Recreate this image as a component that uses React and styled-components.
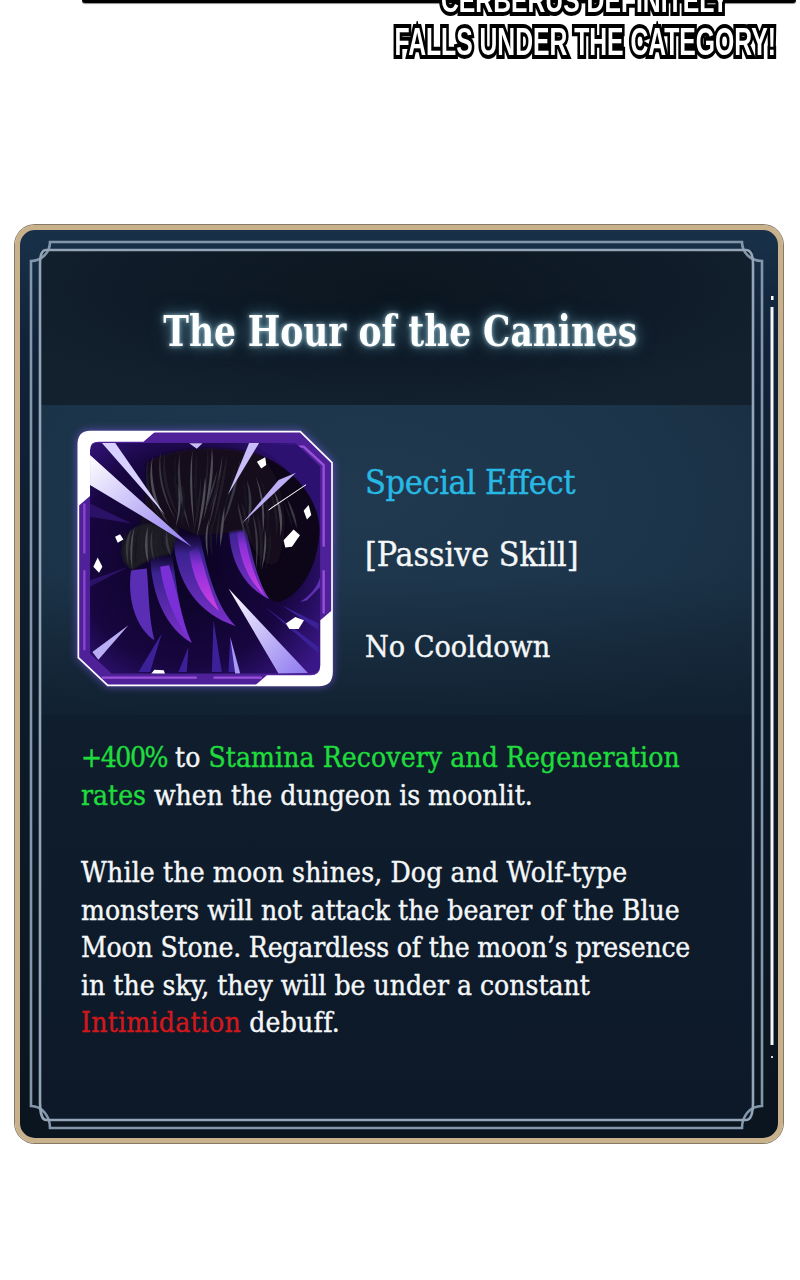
import React from "react";
import styled, { createGlobalStyle } from "styled-components";

const serif = `"DejaVu Serif Condensed", "DejaVu Serif", "Liberation Serif", serif`;

const GlobalStyle = createGlobalStyle`
  html, body {
    margin: 0;
    padding: 0;
    background: #fff;
  }
`;

const Page = styled.div`
  width: 800px;
  height: 1280px;
  overflow: hidden;
  background: #fff;
`;

const ComicStrip = styled.div`
  position: relative;
  height: 224px;
  overflow: hidden;
`;

const PanelEdge = styled.div`
  height: 3px;
  margin-left: 82px;
  width: 714px;
  background: #000;
  border-radius: 0 0 3px 3px;
  box-shadow: 0 1px 1px rgba(0, 0, 0, 0.45);
`;

const Caption = styled.div`
  margin-top: -24px;
  display: flex;
  flex-direction: column;
  align-items: flex-end;
  padding-right: 24px;
  font-family: "Liberation Sans", sans-serif;
  font-weight: 700;
  color: #fff;
  text-transform: uppercase;
  -webkit-text-stroke: 8px #000;
  paint-order: stroke fill;
  stroke-linejoin: round;
`;

const CaptionLine = styled.div`
  white-space: nowrap;
  font-size: ${(p) => p.$size}px;
  line-height: 42px;
  margin-right: ${(p) => p.$inset || 0}px;
  transform: scaleX(${(p) => p.$squeeze});
  transform-origin: right center;
`;

const Card = styled.section`
  position: relative;
  box-sizing: border-box;
  width: 768px;
  height: 918px;
  margin: 1px 0 0 15px;
  padding: 20px 25px 18px 20px;
  border: 5px solid #c9b18b;
  border-radius: 20px;
  box-shadow: 0 0 0 1px #857a65;
  background: linear-gradient(180deg, #183149 0%, #11233a 12%, #0d1a29 50%, #0b151f 100%);
  font-family: ${serif};
  color: #f4f7f8;
`;

const Panel = styled.div`
  height: 100%;
  display: flex;
  flex-direction: column;
`;

const Header = styled.header`
  height: 155px;
  box-sizing: border-box;
  padding: 0 0 0 7px;
  display: flex;
  align-items: center;
  justify-content: center;
  background: radial-gradient(ellipse 60% 80% at 50% 25%, #0b1620 0%, #101c29 70%, #13212e 100%);
`;

const Title = styled.h1`
  margin: 7px 0 0;
  white-space: nowrap;
  font-size: 43px;
  font-weight: 700;
  line-height: 1;
  color: #fdfefe;
  transform: scaleX(0.89);
  text-shadow:
    0 0 5px rgba(180, 225, 240, 0.8),
    0 0 14px rgba(120, 180, 200, 0.6),
    0 0 24px rgba(90, 150, 175, 0.4);
`;

const Summary = styled.div`
  height: 310px;
  box-sizing: border-box;
  padding: 25px 0 0 37px;
  display: flex;
  gap: 31px;
  background:
    linear-gradient(180deg, rgba(15, 29, 44, 0) 55%, rgba(15, 29, 44, 0.75) 100%),
    radial-gradient(ellipse 75% 90% at 45% 30%, #20394f 0%, #1c3449 60%, #172c3f 100%);
`;

const SkillIcon = styled.svg`
  flex: none;
  width: 257px;
  height: 257px;
  filter: drop-shadow(0 0 4px rgba(130, 90, 240, 0.7));
`;

const Details = styled.div`
  display: flex;
  flex-direction: column;
  padding-top: 29px;
  -webkit-text-stroke: 0.4px currentColor;
`;

const Kind = styled.div`
  font-size: 34px;
  line-height: 46px;
  letter-spacing: -0.4px;
  color: #27b8e3;
`;

const Passive = styled.div`
  margin-top: 27px;
  font-size: 33.6px;
  line-height: 46px;
`;

const Cooldown = styled.div`
  margin-top: 49px;
  font-size: 30.2px;
  line-height: 40px;
`;

const Description = styled.div`
  flex: 1;
  padding: 24px 0 0 41px;
  display: flex;
  flex-direction: column;
  gap: 40px;
  background: linear-gradient(180deg, #0f1d2d 0%, #0d1928 100%);
`;

const Paragraph = styled.div`
  font-size: 28px;
  line-height: 37.5px;
  -webkit-text-stroke: 0.4px currentColor;
`;

const Line = styled.div`
  white-space: nowrap;
  letter-spacing: ${(p) => p.$tracking || 0}px;
`;

const Buff = styled.span`
  color: #1fdc3c;
  letter-spacing: ${(p) => p.$tracking || 0}px;
`;

const Debuff = styled.span`
  color: #d0181c;
`;

const FrameArt = styled.svg`
  position: absolute;
  left: -6px;
  top: -6px;
  width: 770px;
  height: 920px;
  pointer-events: none;
`;

// corner flourishes of the double line frame, in page coordinates
const frameOuter =
  "M50 242 H742 C742 252 750 261 762 261 V1106 C750 1106 742 1116 742 1128 H50 C50 1116 42 1106 31 1106 V261 C42 261 50 252 50 242 Z";
const frameInner =
  "M46 250 H746 C751 250 753 256 753 264 V1102 C753 1112 751 1120 746 1120 H46 C42 1120 40 1112 40 1102 V264 C40 256 42 250 46 250 Z";

function Frame() {
  return (
    <FrameArt viewBox="14 224 770 920">
      <path d={frameOuter} fill="none" stroke="#8397ab" strokeWidth="2.6" />
      <path d={frameInner} fill="none" stroke="#93a5b6" strokeWidth="2.6" />
      <rect x="771" y="296" width="2.5" height="4" fill="#fff" />
      <rect x="770.5" y="307" width="3" height="738" fill="#f4f6f7" />
      <rect x="771" y="1056" width="2" height="2" fill="#cfd6da" />
    </FrameArt>
  );
}

// hair strands as quadratic curves: start, control, end
const strands = [
  [262, 110, 245, 220, 310, 310], [300, 95, 285, 190, 345, 300], [345, 100, 330, 200, 375, 330],
  [395, 90, 385, 190, 400, 320], [440, 85, 445, 170, 415, 300], [485, 105, 475, 190, 440, 335],
  [525, 120, 510, 220, 470, 320], [350, 190, 365, 250, 345, 320], [420, 170, 420, 240, 395, 350],
  [470, 150, 455, 210, 430, 280], [545, 180, 565, 250, 545, 320], [585, 170, 615, 250, 605, 345],
  [625, 210, 655, 280, 645, 350], [575, 280, 595, 350, 585, 450], [200, 325, 178, 370, 190, 435],
  [222, 318, 205, 380, 215, 450], [248, 318, 238, 380, 250, 430], [275, 328, 265, 375, 282, 425],
  [305, 332, 300, 370, 318, 410], [445, 295, 430, 350, 442, 410], [478, 260, 470, 320, 465, 380],
  [530, 245, 540, 300, 560, 370], [665, 235, 685, 280, 695, 325], [612, 325, 618, 380, 602, 450],
];

const strandShades = ["#4e4d58", "#201f29", "#383742", "#191822"];

function strandPath([x1, y1, cx, cy, x2, y2], shift, width) {
  return `M${x1 + shift} ${y1} Q${cx + shift - width} ${cy} ${x2 + shift} ${y2} Q${cx + shift + width} ${cy} ${x1 + shift} ${y1} Z`;
}

const shards = [
  "M575 125 L600 112 L603 135 L588 145 Z",
  "M715 272 L730 255 L738 285 L725 298 Z",
  "M655 360 L685 328 L704 345 L680 380 L660 382 Z",
  "M150 350 L165 342 L175 358 L158 368 Z",
  "M85 440 L98 412 L112 440 L102 458 Z",
  "M662 610 L690 590 L716 600 L700 626 L672 626 Z",
  "M258 760 L268 748 L296 750 L300 762 Z",
  "M372 70 L412 70 L395 86 Z",
];

function WolfClawIcon() {
  return (
    <SkillIcon viewBox="36 30 770 770">
      <defs>
        <radialGradient id="artBg" cx="42%" cy="50%" r="68%">
          <stop offset="0%" stopColor="#0a0320" />
          <stop offset="65%" stopColor="#170640" />
          <stop offset="100%" stopColor="#3a1788" />
        </radialGradient>
        <linearGradient id="slash" x1="0" y1="0" x2="1" y2="1">
          <stop offset="0%" stopColor="#ffffff" />
          <stop offset="100%" stopColor="#8d78f0" />
        </linearGradient>
        <linearGradient id="claw" x1="0" y1="0" x2="0" y2="1">
          <stop offset="0%" stopColor="#33207f" stopOpacity="0" />
          <stop offset="22%" stopColor="#3a2390" />
          <stop offset="100%" stopColor="#7c30cc" />
        </linearGradient>
        <linearGradient id="clawCore" x1="0" y1="0" x2="0" y2="1">
          <stop offset="0%" stopColor="#6a2cc8" stopOpacity="0" />
          <stop offset="30%" stopColor="#8a30d8" />
          <stop offset="100%" stopColor="#d040e4" />
        </linearGradient>
        <filter id="soft" x="-10%" y="-10%" width="120%" height="120%">
          <feGaussianBlur stdDeviation="2.5" />
        </filter>
        <filter id="fine" x="-10%" y="-10%" width="120%" height="120%">
          <feGaussianBlur stdDeviation="1.4" />
        </filter>
        <clipPath id="artClip">
          <path d="M100 68 H690 L765 140 V730 Q765 760 735 760 H140 L75 700 V93 Q75 68 100 68 Z" />
        </clipPath>
      </defs>

      <path d="M75 35 H705 L800 128 V755 Q800 795 760 795 H128 L40 712 V75 Q40 35 75 35 Z" fill="#4f2199" stroke="#fff" strokeWidth="5" />
      <path d="M640 80 H715 L775 135 V380 M775 450 V580 M110 772 H395 M445 772 H590" fill="none" stroke="#9a50d8" strokeWidth="7" />
      <path d="M58 250 V400 M58 450 V690" fill="none" stroke="#8a45cc" strokeWidth="7" />

      <g clipPath="url(#artClip)">
        <rect x="60" y="60" width="720" height="720" fill="url(#artBg)" />
        <path d="M560 75 H700 L765 140 V330 C720 200 650 110 560 75 Z" fill="#2d1170" />
        <path d="M75 250 L200 310 L75 290 Z M75 480 L190 440 L75 500 Z" fill="#2c1266" />
        <path d="M220 755 L290 640 L255 755 Z M340 755 L370 680 L365 755 Z M440 755 L445 600 L470 755 Z M490 755 L495 650 L525 755 Z M600 560 L760 680 L760 700 Z M650 555 L760 610 L760 630 Z" fill="#3b2197" />

        <path d="M560 100 C660 120 770 230 762 340 C755 450 700 530 640 545 C590 540 550 470 530 390 Z" fill="#0d0518" />

        <path d="M198 450 C185 540 215 625 268 660 C250 590 252 520 245 445 Z" fill="#5a2eb4" />
        <path d="M255 400 C258 530 305 625 380 668 C345 590 335 510 322 405 Z" fill="url(#claw)" />
        <path d="M285 440 C295 520 330 600 372 660 C350 590 335 510 312 435 Z" fill="#7b2fd6" />
        <path d="M325 350 C330 490 400 580 512 618 C455 560 430 470 402 340 Z" fill="url(#claw)" />
        <path d="M372 395 C385 480 410 530 462 572 C438 520 425 470 398 375 Z" fill="url(#clawCore)" />
        <path d="M495 270 C478 395 525 495 612 537 C575 480 555 390 535 280 Z" fill="url(#claw)" />
        <path d="M515 320 C520 420 550 480 600 528 C572 480 550 420 532 310 Z" fill="url(#clawCore)" />
        <path d="M705 545 C730 530 755 505 765 470 V500 L725 540 Z" fill="#6030b4" />

        <path d="M245 130 C300 80 500 70 590 110 C650 170 680 300 640 420 C620 450 580 430 540 330 L470 340 L400 345 L350 325 L300 320 L225 310 C250 260 240 190 245 130 Z" fill="#14111c" filter="url(#soft)" />
        <path d="M168 395 C178 340 210 310 250 310 L340 325 L320 400 L260 415 L200 450 C185 440 170 420 168 395 Z" fill="#1b1a22" filter="url(#soft)" />
        <g filter="url(#fine)">
          {strands.map((s, i) => (
            <React.Fragment key={i}>
              <path d={strandPath(s, -13, 6)} fill={strandShades[(i + 1) % 4]} />
              <path d={strandPath(s, 0, 8)} fill={strandShades[i % 4]} />
            </React.Fragment>
          ))}
        </g>

        <path d="M75 105 L380 380 L225 285 L75 195 Z" fill="url(#slash)" />
        <path d="M110 68 L300 285 L150 68 Z" fill="#d8d0ff" />
        <path d="M582 68 L488 225 L552 68 Z" fill="#c8bdf8" />
        <path d="M692 158 L530 310 L640 180 Z" fill="#bcaef5" />
        <path d="M722 194 L610 270 L620 262 Z" fill="#fff" stroke="#fff" strokeWidth="2" />
        <path d="M490 505 L728 758 L640 760 Z" fill="url(#slash)" />
        <path d="M190 615 L82 695 L100 718 Z" fill="#b9adf5" />
        <path d="M495 650 L525 760 L510 760 Z" fill="#a99cf0" />
        {shards.map((d, i) => (
          <path key={i} d={d} fill={i === 7 ? "#c9bdf5" : "#fff"} />
        ))}
      </g>

      <path d="M40 258 V75 Q40 35 80 35 H270 L235 65 H100 Q75 65 75 90 V228 Z" fill="#fff" />
      <path d="M800 570 V755 Q800 795 760 795 H570 L605 765 H735 Q765 765 765 735 V600 Z" fill="#fff" />
    </SkillIcon>
  );
}

function App() {
  return (
    <Page>
      <GlobalStyle />
      <ComicStrip>
        <PanelEdge />
        <Caption>
          <CaptionLine $size={34} $inset={48} $squeeze={0.727}>Cerberus definitely</CaptionLine>
          <CaptionLine $size={38} $squeeze={0.65}>Falls under the category!</CaptionLine>
        </Caption>
      </ComicStrip>
      <Card>
        <Frame />
        <Panel>
          <Header>
            <Title>The Hour of the Canines</Title>
          </Header>
          <Summary>
            <WolfClawIcon />
            <Details>
              <Kind>Special Effect</Kind>
              <Passive>[Passive Skill]</Passive>
              <Cooldown>No Cooldown</Cooldown>
            </Details>
          </Summary>
          <Description>
            <Paragraph>
              <Line>
                <Buff $tracking={-1.4}>+400%</Buff> to <Buff $tracking={0.1}>Stamina Recovery and Regeneration</Buff>
              </Line>
              <Line>
                <Buff>rates</Buff> when the dungeon is moonlit.
              </Line>
            </Paragraph>
            <Paragraph>
              <Line $tracking={0.15}>While the moon shines, Dog and Wolf-type</Line>
              <Line>monsters will not attack the bearer of the Blue</Line>
              <Line $tracking={-0.18}>Moon Stone. Regardless of the moon’s presence</Line>
              <Line>in the sky, they will be under a constant</Line>
              <Line $tracking={0.25}>
                <Debuff>Intimidation</Debuff> debuff.
              </Line>
            </Paragraph>
          </Description>
        </Panel>
      </Card>
    </Page>
  );
}

export default App;
